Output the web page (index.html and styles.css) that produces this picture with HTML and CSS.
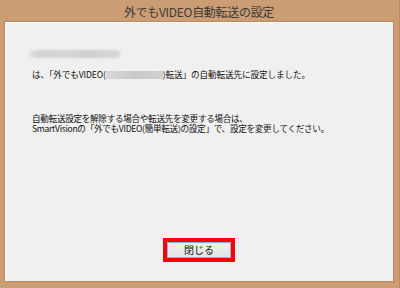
FILE: index.html
```html
<!DOCTYPE html>
<html lang="ja">
<head>
<meta charset="utf-8">
<link rel="stylesheet" href="styles.css">
</head>
<body>
<div class="window">
  <div class="titlebar">外でもVIDEO自動転送の設定</div>
  <div class="content">
    <div class="blurname"></div>
    <p class="line1">は、「外でもVIDEO(<span class="redact"></span>)転送」の自動転送先に設定しました。</p>
    <p class="para">自動転送設定を解除する場合や転送先を変更する場合は、<br>SmartVisionの「外でもVIDEO(簡単転送)の設定」で、設定を変更してください。</p>
    <div class="spacer"></div>
    <div class="btnrow">
      <div class="highlight"><button class="btn">閉じる</button></div>
    </div>
  </div>
</div>
</body>
</html>
```
FILE: styles.css
```css
html, body {
  margin: 0;
  padding: 0;
}
body {
  width: 400px;
  height: 288px;
  overflow: hidden;
  font-family: "Noto Sans CJK JP", "Noto Sans", sans-serif;
}
.window {
  width: 400px;
  height: 288px;
  box-sizing: border-box;
  background: #cc9c73;
  border-right: 1px solid #b98b63;
  padding: 0 5px 6px 4px;
  display: flex;
  flex-direction: column;
}
.titlebar {
  height: 21px;
  line-height: 24px;
  text-align: center;
  font-size: 12px;
  color: #3a3a3a;
  letter-spacing: -0.3px;
}
.content {
  flex: 1;
  background: #f0f0f0;
  border: 1px solid #b88a62;
  box-shadow: inset 1px 1px 0 #fbfbfb;
  display: flex;
  flex-direction: column;
  padding: 0 0 0 27px;
  font-size: 8.6px;
  color: #111;
}
.blurname {
  margin-top: 28px;
  margin-left: -3px;
  width: 91px;
  height: 8px;
  background: linear-gradient(90deg, #e2e2e2 0%, #d2d2d2 12%, #d6d6d6 40%, #cecece 60%, #d8d8d8 100%);
  border-radius: 3px;
  filter: blur(0.8px);
}
.line1 {
  margin: 11px 0 0 0;
  line-height: 10px;
  white-space: nowrap;
  letter-spacing: -0.1px;
}
.redact {
  display: inline-block;
  width: 57px;
  height: 8px;
  vertical-align: -1px;
  background: linear-gradient(90deg, #d8d8d8, #c9c9c9 50%, #d0d0d0);
  filter: blur(0.6px);
}
.para {
  margin: 34px 0 0 0;
  line-height: 10px;
  white-space: nowrap;
  letter-spacing: -0.3px;
}
.spacer {
  flex: 1;
}
.btnrow {
  display: flex;
  justify-content: center;
  margin-left: -27px;
  margin-bottom: 19px;
}
.highlight {
  background: #ff0000;
  padding: 4px;
  display: flex;
}
.btn {
  width: 64px;
  height: 16px;
  margin: 0;
  padding: 0;
  box-sizing: border-box;
  border: 1px solid #7fb5e8;
  background: linear-gradient(#f2f2f2, #e2e2e2);
  box-shadow: inset 0 0 0 1px #dcebf8;
  font-family: "Noto Sans CJK JP", sans-serif;
  font-size: 10px;
  line-height: 12px;
  color: #111;
}
```
